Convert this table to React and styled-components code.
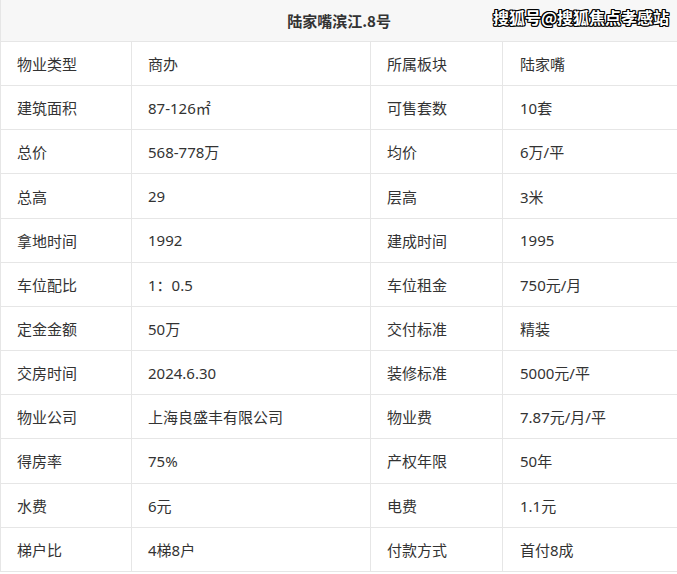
import React from "react";
import styled, { createGlobalStyle } from "styled-components";

const rows = [
  ["物业类型", "商办", "所属板块", "陆家嘴"],
  ["建筑面积", "87-126㎡", "可售套数", "10套"],
  ["总价", "568-778万", "均价", "6万/平"],
  ["总高", "29", "层高", "3米"],
  ["拿地时间", "1992", "建成时间", "1995"],
  ["车位配比", "1：0.5", "车位租金", "750元/月"],
  ["定金金额", "50万", "交付标准", "精装"],
  ["交房时间", "2024.6.30", "装修标准", "5000元/平"],
  ["物业公司", "上海良盛丰有限公司", "物业费", "7.87元/月/平"],
  ["得房率", "75%", "产权年限", "50年"],
  ["水费", "6元", "电费", "1.1元"],
  ["梯户比", "4梯8户", "付款方式", "首付8成"],
];

const colWidths = [131, 239, 132, 175];

const GlobalStyle = createGlobalStyle`
  body {
    margin: 0;
    background: #fff;
    font-family: "Noto Sans", "Noto Sans CJK SC", sans-serif;
  }
`;

const Wrapper = styled.div`
  position: relative;
  width: 677px;
`;

const Table = styled.table`
  width: 677px;
  border-collapse: collapse;
  table-layout: fixed;
  color: #333;
  font-size: 15px;
`;

const Col = styled.col`
  width: ${(p) => p.$w}px;
`;

const HeadCell = styled.th`
  height: 41px;
  padding: 0;
  background: #f7f7f7;
  border: 1px solid #e6e6e6;
  border-top: none;
  font-family: "Noto Sans CJK SC", sans-serif;
  font-weight: bold;
  text-align: center;
  font-size: 15px;
  color: #333;
`;

const Cell = styled.td`
  height: 43.17px;
  padding: 0 0 0 ${(p) => p.$pad}px;
  border: 1px solid #e6e6e6;
  white-space: nowrap;
`;

const Watermark = styled.div`
  position: absolute;
  top: 5px;
  right: 8px;
  font-family: "Noto Sans CJK SC", sans-serif;
  font-size: 16px;
  font-weight: bold;
  color: #fff;
  text-shadow: -1px -1px 0 #000, 1px -1px 0 #000, -1px 1px 0 #000, 1px 1px 0 #000,
    0 1px 0 #000, 0 -1px 0 #000, 1px 0 0 #000, -1px 0 0 #000;
`;

export default function App() {
  return (
    <Wrapper>
      <GlobalStyle />
      <Table>
        <colgroup>
          {colWidths.map((w, i) => (
            <Col key={i} $w={w} />
          ))}
        </colgroup>
        <thead>
          <tr>
            <HeadCell colSpan={4}>陆家嘴滨江.8号</HeadCell>
          </tr>
        </thead>
        <tbody>
          {rows.map((r, i) => (
            <tr key={i}>
              {r.map((c, j) => (
                <Cell key={j} $pad={j === 3 ? 17 : 16}>
                  {c}
                </Cell>
              ))}
            </tr>
          ))}
        </tbody>
      </Table>
      <Watermark>搜狐号@搜狐焦点孝感站</Watermark>
    </Wrapper>
  );
}
